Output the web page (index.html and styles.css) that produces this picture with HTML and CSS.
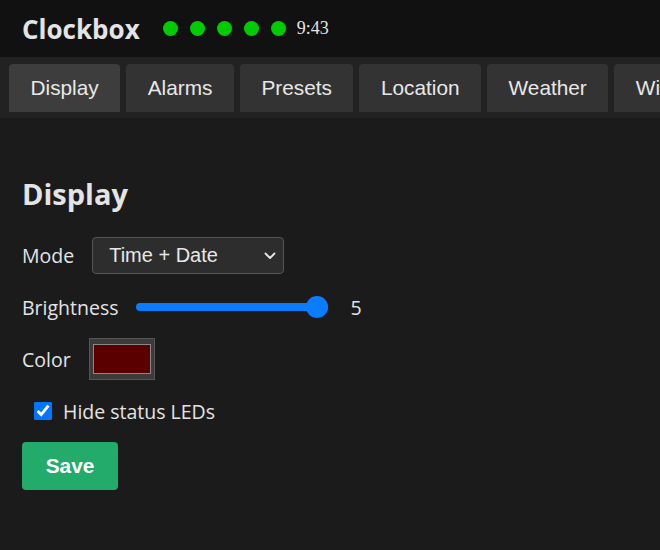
FILE: index.html
```html
<!DOCTYPE html>
<html lang="en">
<head>
    <meta charset="UTF-8">
    <meta name="viewport" content="width=device-width, initial-scale=1.0">
    <title>Clockbox</title>
    <link rel="stylesheet" href="styles.css">
</head>
<body>
    <header class="topbar">
        <h1 class="brand">Clockbox</h1>
        <div class="leds">
            <span class="led"></span>
            <span class="led"></span>
            <span class="led"></span>
            <span class="led"></span>
            <span class="led"></span>
        </div>
        <span class="clock">9:43</span>
    </header>

    <nav class="tabs">
        <button class="tab active">Display</button>
        <button class="tab">Alarms</button>
        <button class="tab">Presets</button>
        <button class="tab">Location</button>
        <button class="tab">Weather</button>
        <button class="tab">WiFi</button>
    </nav>

    <main class="panel">
        <h2>Display</h2>
        <form action="">
            <div class="row">
                <label for="mode">Mode</label>
                <div class="select-wrap">
                    <select name="mode" id="mode">
                        <option>Time + Date</option>
                        <option>Time</option>
                        <option>Date</option>
                    </select>
                    <svg class="chevron" width="12" height="8" viewBox="0 0 12 8">
                        <path d="M1.5 1.5 L6 6 L10.5 1.5" fill="none" stroke="#e8e8e8" stroke-width="1.8" stroke-linecap="round" stroke-linejoin="round"/>
                    </svg>
                </div>
            </div>
            <div class="row">
                <label for="brightness">Brightness</label>
                <input type="range" id="brightness" min="0" max="5" value="5">
                <span class="value">5</span>
            </div>
            <div class="row">
                <label for="color">Color</label>
                <input type="color" id="color" value="#5a0000">
            </div>
            <div class="row check">
                <input type="checkbox" id="hideleds" checked>
                <label for="hideleds">Hide status LEDs</label>
            </div>
            <button type="button" class="save">Save</button>
        </form>
    </main>
</body>
</html>
```

FILE: styles.css
```css
body {
    margin: 0;
    background: #1b1b1b;
    color: #e4e4e4;
    font-family: "Open Sans", sans-serif;
    font-size: 19.5px;
}
.topbar {
    display: flex;
    align-items: center;
    height: 57px;
    padding: 0 22px;
    background: #111;
}
.brand {
    margin: 0 23px 0 0;
    font-size: 26px;
    font-weight: 700;
}
.leds {
    display: flex;
    gap: 12px;
}
.led {
    width: 15px;
    height: 15px;
    border-radius: 50%;
    background: #00cc00;
}
.clock {
    margin-left: 11px;
    font-family: "Liberation Serif", serif;
    font-size: 18px;
}
.tabs {
    display: flex;
    gap: 6px;
    padding: 7px 9px 6px;
    background: #222;
    overflow: hidden;
    white-space: nowrap;
}
.tab {
    flex: none;
    height: 48px;
    padding: 0 21.5px;
    border: none;
    border-radius: 4px 4px 0 0;
    background: #333;
    color: #e8e8e8;
    font-family: "Liberation Sans", Arial, sans-serif;
    font-size: 20.8px;
}
.tab.active {
    background: #3d3d3d;
}
.panel {
    padding: 20px 22px;
}
h2 {
    margin: 36px 0 21px;
    font-size: 29px;
    font-weight: 700;
}
.row {
    display: flex;
    align-items: center;
    gap: 18px;
    height: 42px;
    margin-bottom: 10px;
}
.select-wrap {
    position: relative;
    display: flex;
}
#mode {
    appearance: none;
    width: 192px;
    height: 37px;
    padding: 0 30px 0 16px;
    border: 1px solid #555;
    border-radius: 4px;
    background: #2d2d2d;
    color: #e8e8e8;
    font-family: "Liberation Sans", Arial, sans-serif;
    font-size: 20px;
}
.chevron {
    position: absolute;
    right: 8px;
    top: 15px;
    pointer-events: none;
}
#brightness {
    -webkit-appearance: none;
    appearance: none;
    width: 192px;
    height: 8px;
    margin: 0;
    border-radius: 4px;
    background: #0a7cff;
}
#brightness::-webkit-slider-thumb {
    -webkit-appearance: none;
    width: 22px;
    height: 22px;
    border-radius: 50%;
    background: #0a7cff;
}
.value {
    margin-left: 4px;
}
#color {
    width: 66px;
    height: 42px;
    padding: 5px 3px;
    border: 1px solid #555;
    background: #3b3b3b;
}
#color::-webkit-color-swatch-wrapper {
    padding: 0;
}
#color::-webkit-color-swatch {
    border: 1px solid #888;
}
.check {
    gap: 11px;
    padding-left: 12px;
}
.check input {
    width: 18px;
    height: 18px;
    margin: 0;
}
.save {
    width: 96px;
    height: 48px;
    border: none;
    border-radius: 4px;
    background: #22ab6a;
    color: #fff;
    font-family: "Liberation Sans", Arial, sans-serif;
    font-size: 20.8px;
    font-weight: 700;
}
```
